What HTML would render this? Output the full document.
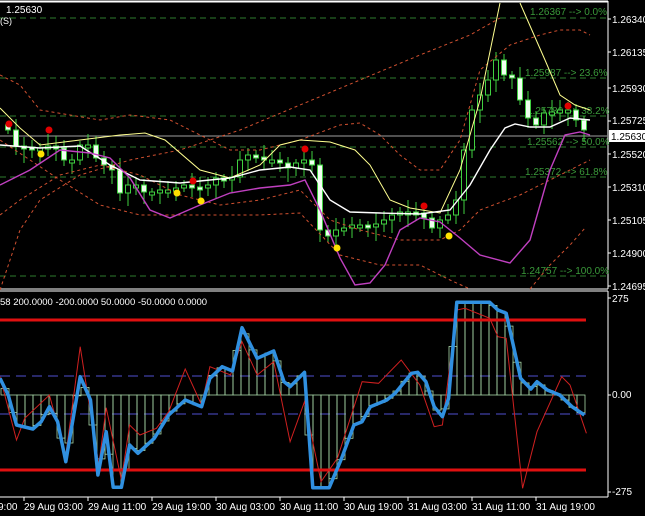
<!DOCTYPE html><html><head><style>
body{margin:0;background:#000;width:645px;height:516px;overflow:hidden;font-family:"Liberation Sans",sans-serif}
svg{display:block}
text{font-family:"Liberation Sans",sans-serif;font-size:10px;fill:#fff}
</style></head><body>
<svg id="s" width="645" height="516" viewBox="0 0 645 516">
<rect width="645" height="516" fill="#000"/>
<line x1="0" y1="1.5" x2="608" y2="1.5" stroke="#fff" stroke-width="2"/>
<line x1="608" y1="1" x2="608" y2="289" stroke="#fff"/>
<line x1="0" y1="289" x2="608" y2="289" stroke="#fff"/>
<line x1="0" y1="291" x2="608" y2="291" stroke="#fff"/>
<line x1="608" y1="291" x2="608" y2="497" stroke="#fff"/>
<line x1="0" y1="497" x2="608" y2="497" stroke="#fff"/>
<g stroke="#2e7d2e" stroke-dasharray="6,4">
<line x1="0" y1="18" x2="607" y2="18"/><line x1="0" y1="78" x2="607" y2="78"/>
<line x1="0" y1="116" x2="607" y2="116"/><line x1="0" y1="147" x2="607" y2="147"/>
<line x1="0" y1="177" x2="607" y2="177"/><line x1="0" y1="276" x2="607" y2="276"/>
</g>
<line x1="0" y1="136" x2="607" y2="136" stroke="#a0a0a0"/>
<g font-size="10">
<text x="530" y="15" style="fill:#3a9a3a">1.26367 --&gt; 0.0%</text>
<text x="525" y="76" style="fill:#3a9a3a">1.25987 --&gt; 23.6%</text>
<text x="527" y="114" style="fill:#3a9a3a">1.25780 --&gt; 38.2%</text>
<text x="527" y="145" style="fill:#3a9a3a">1.25562 --&gt; 50.0%</text>
<text x="525" y="175" style="fill:#3a9a3a">1.25372 --&gt; 61.8%</text>
<text x="521" y="274" style="fill:#3a9a3a">1.24757 --&gt; 100.0%</text>
</g>
<g id="cand"></g>
<g fill="none" stroke-width="1">
<path stroke="#d05030" stroke-dasharray="3,3" d="M0,290 L20,230 L40,200 L80,175 L130,160 L180,150 L240,130 L300,105 L360,80 L420,55 L470,35 L500,18"/>
<path stroke="#d05030" stroke-dasharray="3,3" d="M0,75 L20,85 L40,110 L70,115 L100,120 L130,115 L170,120 L200,135 L230,150 L260,150 L300,140 L340,125 L360,123 L380,135 L400,155 L420,170 L440,170 L460,140 L480,70 L510,45 L540,35 L560,30 L580,30 L590,35"/>
<path stroke="#d05030" stroke-dasharray="3,3" d="M0,215 L20,200 L60,175 L100,165 L140,175 L180,195 L220,205 L260,200 L300,190 L330,220 L360,230 L400,240 L440,240 L460,230 L480,210 L520,195 L560,175 L590,160"/>
<path stroke="#d05030" stroke-dasharray="3,3" d="M0,140 L30,160 L60,180 L100,205 L140,215 L180,215 L220,215 L260,215 L300,213 L340,255 L380,265 L420,265 L450,280 L470,289"/>
<path stroke="#d05030" stroke-dasharray="3,3" d="M530,289 L550,265 L570,245 L585,228"/>
<path stroke="#ffff90" d="M0,108 L20,128 L40,145 L80,140 L120,135 L145,133 L165,140 L200,170 L230,178 L260,165 L280,145 L300,140 L330,142 L355,150 L370,165 L390,200 L410,208 L440,213 L460,170 L480,100 L500,3 M520,3 L545,60 L560,95 L575,105 L590,110"/>
<path stroke="#ffffff" stroke-width="1.4" d="M0,145 L40,148 L80,146 L110,165 L140,180 L180,183 L230,178 L260,170 L290,167 L310,170 L330,200 L350,212 L380,213 L420,214 L450,210 L470,185 L490,150 L505,128 L515,124 L530,127 L550,127 L570,118 L590,120"/>
<path stroke="#c040c0" stroke-width="1.4" d="M0,185 L30,170 L60,150 L90,153 L110,158 L130,178 L150,210 L170,218 L200,205 L230,193 L260,188 L290,185 L305,180 L320,210 L340,258 L355,285 L370,283 L385,265 L400,230 L420,218 L440,222 L460,238 L480,255 L510,263 L530,240 L550,170 L565,135 L580,132 L590,135"/>
</g>
<g fill="#e00000"><circle cx="9" cy="124" r="3.5"/><circle cx="49" cy="130" r="3.5"/><circle cx="193" cy="181" r="3.5"/><circle cx="305" cy="149" r="3.5"/><circle cx="424" cy="206" r="3.5"/><circle cx="568" cy="106" r="3.5"/></g>
<g fill="#ffe000"><circle cx="41" cy="154" r="3.5"/><circle cx="177" cy="193" r="3.5"/><circle cx="201" cy="201" r="3.5"/><circle cx="337" cy="248" r="3.5"/><circle cx="449" cy="236" r="3.5"/></g>
<text x="6" y="13">1.25630</text><text x="0" y="24" style="font-size:9px">(S)</text>
<g>
<text x="612" y="23">1.26340</text><text x="612" y="56">1.26135</text><text x="612" y="92">1.25930</text>
<text x="612" y="124">1.25725</text><text x="612" y="158">1.25520</text><text x="612" y="191">1.25310</text>
<text x="612" y="224">1.25105</text><text x="612" y="257">1.24900</text><text x="612" y="290">1.24695</text>
</g>
<rect x="609" y="130" width="36" height="12" fill="#fff"/><text x="611" y="140" style="fill:#000">1.25630</text>
<g stroke="#5050d0" stroke-dasharray="10,6"><line x1="0" y1="376" x2="590" y2="376"/><line x1="0" y1="414" x2="590" y2="414"/></g>
<g id="hist"></g>
<line x1="0" y1="320" x2="586" y2="320" stroke="#e01010" stroke-width="3"/>
<line x1="0" y1="470" x2="586" y2="470" stroke="#e01010" stroke-width="3"/>
<path id="red" fill="none" stroke="#d02020" stroke-width="1"/>
<path id="blue" fill="none" stroke="#3090e0" stroke-width="3.5" stroke-linejoin="round"/>
<text x="0" y="305" style="font-size:9.5px">58 200.0000 -200.0000 50.0000 -50.0000 0.0000</text>
<text x="612" y="302">275</text><text x="612" y="398">0.00</text><text x="612" y="495">-275</text>
<g id="tick" stroke="#fff"></g>
<g style="font-size:10px">
<text x="-2" y="510">9:00</text><text x="24" y="510">29 Aug 03:00</text><text x="88" y="510">29 Aug 11:00</text>
<text x="152" y="510">29 Aug 19:00</text><text x="216" y="510">30 Aug 03:00</text><text x="280" y="510">30 Aug 11:00</text>
<text x="344" y="510">30 Aug 19:00</text><text x="408" y="510">31 Aug 03:00</text><text x="472" y="510">31 Aug 11:00</text>
<text x="536" y="510">31 Aug 19:00</text>
</g>
</svg>
<script>
var NS="http://www.w3.org/2000/svg";
function el(p,t,a){var e=document.createElementNS(NS,t);for(var k in a)e.setAttribute(k,a[k]);p.appendChild(e);return e;}
var cl=[130,146,147,148,148,146,148,160,160,145,145,158,165,170,193,185,185,192,192,190,190,188,185,187,188,185,178,180,177,160,155,157,160,160,163,168,163,160,165,230,236,230,228,225,225,227,224,220,215,212,212,213,218,228,220,215,200,150,110,95,80,60,75,78,100,118,125,113,112,110,110,120,130];
var C=document.getElementById('cand');var prev=125;
for(var i=0;i<cl.length;i++){var x=8+i*8,c=cl[i],o=prev,bt=Math.min(o,c),bb=Math.max(o,c);if(bb-bt<3){bb=bt+3;}
var wt=bt-4-(i*7%9),wb=bb+4+(i*5%11);
el(C,'line',{x1:x,y1:wt,x2:x,y2:wb,stroke:'#40d040'});
var white=(c>o);
el(C,'rect',{x:x-2.5,y:bt,width:5,height:bb-bt,fill:white?'#f0fff0':'#000',stroke:'#40d040'});
prev=c;}
var SX=2.43;
function P(a){var s='';for(var i=0;i<a.length;i+=2)s+=(i?'L':'M')+(a[i]/SX).toFixed(1)+','+(285+a[i+1]/3).toFixed(1);return s;}
var B=[0,280,20,330,40,420,80,432,100,410,120,365,140,410,160,530,195,275,220,345,238,570,258,440,275,607,295,607,315,480,335,505,375,460,410,390,450,345,490,365,510,280,540,245,565,258,588,128,625,220,665,198,690,290,705,305,740,262,760,608,800,608,830,520,860,420,880,410,900,365,940,345,960,325,1000,265,1015,262,1035,290,1055,365,1075,395,1090,340,1110,52,1190,52,1210,75,1230,85,1265,280,1290,312,1305,290,1330,315,1360,330,1390,365,1420,390];
var R=[0,275,40,465,60,400,120,330,140,420,160,510,195,185,240,540,258,368,295,585,315,420,340,450,380,430,410,380,450,252,490,360,510,245,560,270,588,170,625,270,665,230,705,470,740,350,780,590,820,520,880,290,920,295,975,225,1020,300,1055,425,1075,420,1110,75,1130,70,1190,100,1210,155,1230,160,1270,610,1305,440,1365,275,1385,300,1425,445];
document.getElementById('blue').setAttribute('d',P(B));
document.getElementById('red').setAttribute('d',P(R));
function val(x){var X=x*SX;for(var i=0;i<B.length-2;i+=2){if(X>=B[i]&&X<=B[i+2]){var t=(X-B[i])/(B[i+2]-B[i]||1);return 285+(B[i+1]+t*(B[i+3]-B[i+1]))/3;}}return 395;}
var H=document.getElementById('hist');
for(var x=1;x<585;x+=8){var v=val(x+4);var y0=Math.min(v,395),y1=Math.max(v,395);
el(H,'rect',{x:x,y:y0.toFixed(1),width:8,height:(y1-y0).toFixed(1),fill:'none',stroke:'#a8d8a8','stroke-width':0.8});}
var T=document.getElementById('tick');[24,88,152,216,280,344,408,472,536].forEach(function(x){el(T,'line',{x1:x,y1:497,x2:x,y2:501});});
[19,52,88,121,154,187,220,253,286,298,395,492].forEach(function(y){el(T,'line',{x1:608,y1:y,x2:611,y2:y});});
</script>
</body></html>
